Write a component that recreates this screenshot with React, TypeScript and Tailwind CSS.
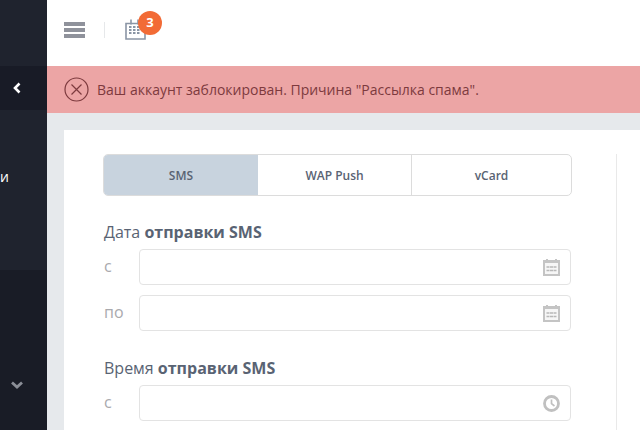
const CalendarField = () => (
  <svg width="17" height="17" viewBox="0 0 17 17">
    <path d="M0 1h3V0h2v1h7V0h2v1h3v16H0z" fill="#c4c4c4" />
    <rect x="2" y="4" width="13" height="11" fill="#f6f6f6" />
    <path d="M3.5 8h10M3.5 11.5h10" stroke="#b8b8b8" strokeWidth="1.6" strokeDasharray="3 .5" />
  </svg>
);

const ClockIcon = () => (
  <svg width="17" height="17" viewBox="0 0 17 17" fill="none" stroke="#c0c0c0">
    <circle cx="8.5" cy="8.5" r="7" strokeWidth="2.8" />
    <path d="M8.5 4.5v4.2l3 2.3" strokeWidth="1.7" />
  </svg>
);

function Field({ label, icon }: { label: string; icon: React.ReactNode }) {
  return (
    <div className="flex items-center h-[36px] pl-px pr-px">
      <span className="w-[35px] text-[16px] leading-[22px] pb-[3px] text-[#a9a9ad]">{label}</span>
      <div className="flex-1 h-[36px] bg-white border border-[#e3e3e3] rounded-[4px] flex items-center justify-end pr-[10px]">
        {icon}
      </div>
    </div>
  );
}

export default function App() {
  return (
    <div className="w-[640px] h-[430px] overflow-hidden flex font-['Open_Sans',sans-serif] bg-[#e6e9ec]">
      {/* sidebar */}
      <div className="w-[47px] shrink-0 flex flex-col bg-[#1f232e]">
        <div className="h-[66px]" />
        <div className="h-[44px] bg-[#181b26] flex items-center pl-[12px]">
          <svg width="10" height="12" viewBox="0 0 10 12" fill="none" stroke="#fff" strokeWidth="2.6">
            <path d="M7.5 1.5 3 6l4.5 4.5" />
          </svg>
        </div>
        <div className="h-[160px] flex items-center pl-0 text-white text-[14px]">
          <span className="pb-[28px]">и</span>
        </div>
        <div className="flex-1 bg-[#191c26] pl-[10px] pt-[110px]">
          <svg width="14" height="10" viewBox="0 0 14 10" fill="none" stroke="#8b8e97" strokeWidth="2.8">
            <path d="M2 2.5 7 7l5-4.5" />
          </svg>
        </div>
      </div>

      <div className="flex-1 flex flex-col min-w-0">
        {/* header */}
        <div className="h-[66px] bg-white flex items-center pl-[17px] pb-[6px] shrink-0">
          <div className="w-[21px] flex flex-col gap-[2px]">
            <div className="h-[4px] bg-[#8f929b]" />
            <div className="h-[4px] bg-[#8f929b]" />
            <div className="h-[4px] bg-[#8f929b]" />
          </div>
          <div className="w-px h-[16px] bg-[#e6e8ea] ml-[19px]" />
          <div className="relative ml-[20px] mt-[-1px]">
            <svg width="21" height="21" viewBox="0 0 21 21" fill="none" stroke="#8a95a5" className="block">
              <path d="M1 4.5h19v15.5H1z" strokeWidth="1.6" />
              <path d="M6 .5v5M13 .5v5" strokeWidth="1.6" />
              <path d="M4 8h2.5M8 8h2.5M12 8h2.5M4 11h2.5M8 11h2.5M12 11h2.5M4 14h2.5M8 14h2.5M12 14h2.5" strokeWidth="1.8" />
            </svg>
            <span className="absolute left-[13px] top-[-8px] w-[24px] h-[24px] rounded-full bg-[#f26b36] text-white text-[13px] font-bold flex items-center justify-center">
              3
            </span>
          </div>
        </div>

        {/* alert */}
        <div className="h-[47px] bg-[#eca5a5] flex items-center pl-[17px] gap-[8px] text-[#7d3a3e] text-[14px] shrink-0">
          <svg width="25" height="25" viewBox="0 0 25 25" fill="none" stroke="#7d3a3e" strokeWidth="1.2">
            <circle cx="12.5" cy="12.5" r="11.5" />
            <path d="m7.5 7.5 10 10M17.5 7.5l-10 10" />
          </svg>
          <span>Ваш аккаунт заблокирован. Причина "Рассылка спама".</span>
        </div>

        {/* content */}
        <div className="flex-1 pl-[17px] pt-[17px] min-h-0">
          <div className="h-full bg-white pt-[24px]">
            <div className="w-[553px] h-full pl-[39px] pr-[44px] border-r border-[#e9e9e9]">
              <div className="flex h-[42px] border border-[#dcdcdc] rounded-[5px] overflow-hidden text-[12px] font-semibold text-[#596373]">
                <div className="w-[154px] bg-[#c8d3de] flex items-center justify-center pt-[2px]">SMS</div>
                <div className="w-[154px] border-r border-[#dcdcdc] flex items-center justify-center pt-[2px]">WAP Push</div>
                <div className="flex-1 flex items-center justify-center pt-[2px]">vCard</div>
              </div>

              <div className="mt-[25px] pl-px text-[16px] leading-[22px] text-[#596373] mb-[6px]">
                Дата <b>отправки SMS</b>
              </div>
              <div className="flex flex-col gap-[10px]">
                <Field label="с" icon={<CalendarField />} />
                <Field label="по" icon={<CalendarField />} />
              </div>

              <div className="mt-[26px] pl-px text-[16px] leading-[22px] text-[#596373] mb-[6px]">
                Время <b>отправки SMS</b>
              </div>
              <Field label="с" icon={<ClockIcon />} />
            </div>
          </div>
        </div>
      </div>
    </div>
  );
}
